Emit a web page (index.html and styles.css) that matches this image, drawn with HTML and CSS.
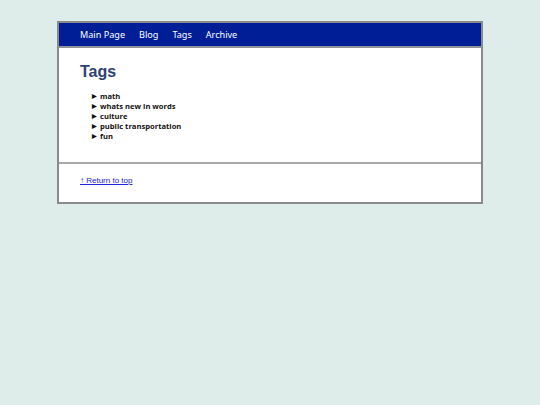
FILE: index.html
```html
<!DOCTYPE html>
<html>
<head>
<meta charset="utf-8">
<link rel="stylesheet" href="styles.css">
</head>
<body>
<div class="page">
  <nav class="nav">
    <a href="#">Main Page</a>
    <a href="#">Blog</a>
    <a href="#">Tags</a>
    <a href="#">Archive</a>
  </nav>
  <main class="content">
    <h1 class="title">Tags</h1>
    <ul class="tags">
      <li>math</li>
      <li>whats new in words</li>
      <li>culture</li>
      <li>public transportation</li>
      <li>fun</li>
    </ul>
  </main>
  <footer class="footer">
    <a href="#" class="top-link">↑ Return to top</a>
  </footer>
</div>
</body>
</html>
```
FILE: styles.css
```css
html, body {
  margin: 0;
  padding: 0;
}
body {
  background: #deedea;
  padding-top: 21px;
}
.page {
  width: 422px;
  margin: 0 auto;
  border: 2px solid #8a8a8a;
  background: #fff;
}
.nav {
  background: #001e96;
  height: 23px;
  border-bottom: 2px solid #8f9299;
  display: flex;
  align-items: center;
  gap: 14px;
  padding-left: 21px;
  font-family: "Noto Sans", sans-serif;
  font-size: 9.1px;
}
.nav a {
  color: #fff;
  text-decoration: none;
}
.content {
  padding: 15px 21px 21px;
  border-bottom: 2px solid #a8a8a8;
}
.title {
  margin: 0 0 10px;
  font-family: "Liberation Sans", Arial, sans-serif;
  font-size: 16px;
  font-weight: bold;
  color: #2d4272;
}
.tags {
  margin: 0;
  padding-left: 12px;
  list-style: none;
  font-family: "Open Sans", sans-serif;
  font-size: 7.6px;
  font-weight: bold;
  line-height: 10px;
  color: #111;
}
.tags li::before {
  content: "▶";
  font-size: 6px;
  display: inline-block;
  width: 8px;
  vertical-align: 1px;
}
.footer {
  padding: 12px 21px 16px;
  font-family: "Liberation Sans", Arial, sans-serif;
  font-size: 8px;
  line-height: 10px;
}
.top-link {
  color: #2222dd;
}
```
